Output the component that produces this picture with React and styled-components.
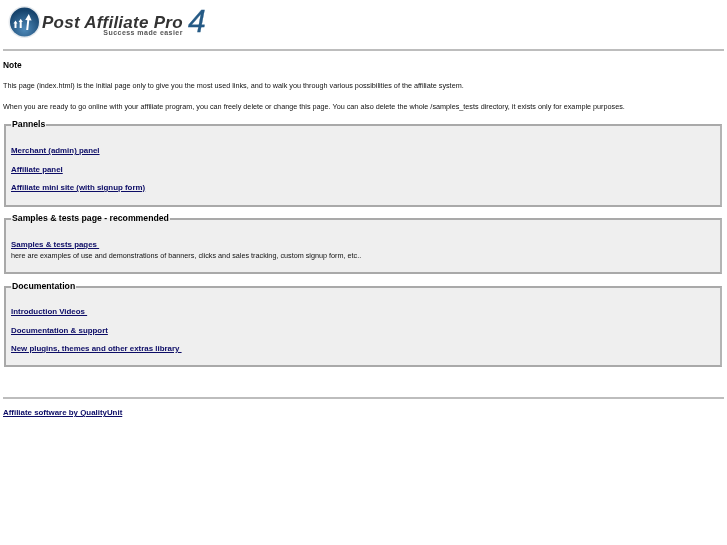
import React from "react";
import styled, { createGlobalStyle } from "styled-components";

const GlobalStyle = createGlobalStyle`
  html, body {
    margin: 0;
    padding: 0;
    background: #fff;
  }
  body {
    font-family: "Liberation Sans", Arial, sans-serif;
    font-size: 7.24px;
    line-height: 11px;
    color: #111;
  }
`;

/* own layer, so small text gets grey antialiasing like the reference */
const Page = styled.div`
  padding: 5px 3px 0;
  will-change: transform;
`;

const Logo = styled.div`
  display: flex;
  align-items: flex-start;
  height: 35px;
  padding-left: 5px;
`;

const LogoMark = styled.svg`
  margin-top: 1px;
  flex: none;
`;

const LogoWords = styled.div`
  display: flex;
  flex-direction: column;
  margin-left: 1px;
  padding-top: 11px;
`;

const LogoName = styled.div`
  font-size: 17px;
  line-height: 14px;
  font-weight: bold;
  font-style: italic;
  color: #333;
  letter-spacing: 0.27px;
  white-space: nowrap;
`;

const LogoTag = styled.div`
  font-size: 7px;
  line-height: 6px;
  font-weight: bold;
  color: #555;
  letter-spacing: 0.46px;
  text-align: right;
  white-space: nowrap;
`;

const LogoFour = styled.div`
  font-size: 32px;
  line-height: 32px;
  font-style: italic;
  color: #255a85;
  -webkit-text-stroke: 0.3px #255a85;
  margin-left: 5px;
`;

const Rule = styled.hr`
  margin: ${(p) => p.$margin};
  height: 2px;
  border: 0;
  background: #bdbdbd;
`;

const Note = styled.h4`
  margin: 9px 0 0;
  font-size: 8.4px;
  line-height: 11px;
  font-weight: bold;
  color: #000;
`;

const Para = styled.p`
  margin: ${(p) => p.$top}px 0 0;
  white-space: nowrap;
`;

const Group = styled.fieldset`
  margin: ${(p) => p.$top}px 2px 0 1px;
  padding: 11px 5px ${(p) => p.$bottom}px;
  min-width: 0;
  background: #efefef;
  border: 2px solid #a9a9a9;
  border-right-color: #b4b4b4;
`;

const GroupTitle = styled.legend`
  padding: 0 1px;
  font-size: 8.7px;
  line-height: 11px;
  font-weight: bold;
  color: #000;
`;

const LinkRow = styled.div`
  margin-top: ${(p) => p.$gap}px;
`;

const Strong = styled.a`
  font-size: 7.9px;
  font-weight: bold;
  color: #0c0c66;
  text-decoration: underline;
`;

const Hint = styled.div`
  color: #111;
`;

const App = () => (
  <Page>
    <GlobalStyle />
    <Logo>
      <LogoMark width="33" height="32" viewBox="0 0 33 32">
        <defs>
          <radialGradient id="orb" cx="50%" cy="75%" r="65%">
            <stop offset="0%" stopColor="#4f8aba" />
            <stop offset="100%" stopColor="#16436c" />
          </radialGradient>
        </defs>
        <circle cx="16.5" cy="16" r="16" fill="#e6eaee" />
        <circle cx="16.5" cy="16" r="14.5" fill="url(#orb)" />
        <path d="M7.5 22v-5M12.7 22v-6.5M19.2 24l1.2-11" stroke="#fff" strokeWidth="2" fill="none" />
        <path d="M5.5 17.5l2-3 2 3zM10.6 16l2.1-3.2 2.1 3.2zM17.2 14l3.6-6 2.8 6.6z" fill="#fff" />
      </LogoMark>
      <LogoWords>
        <LogoName>Post Affiliate Pro</LogoName>
        <LogoTag>Success made easier</LogoTag>
      </LogoWords>
      <LogoFour>4</LogoFour>
    </Logo>
    <Rule $margin="9px 0 0" />
    <Note>Note</Note>
    <Para $top={9}>This page (index.html) is the initial page only to give you the most used links, and to walk you through various possibilities of the affiliate system.</Para>
    <Para $top={10}>When you are ready to go online with your affiliate program, you can freely delete or change this page. You can also delete the whole /samples_tests directory, it exists only for example purposes.</Para>
    <Group $top={7} $bottom={12}>
      <GroupTitle>Pannels</GroupTitle>
      <LinkRow $gap={4}><Strong href="#">Merchant (admin) panel</Strong></LinkRow>
      <LinkRow $gap={8}><Strong href="#">Affiliate panel</Strong></LinkRow>
      <LinkRow $gap={7}><Strong href="#">Affiliate mini site (with signup form)</Strong></LinkRow>
    </Group>
    <Group $top={6} $bottom={11}>
      <GroupTitle>Samples &amp; tests page - recommended</GroupTitle>
      <LinkRow $gap={4}><Strong href="#">Samples &amp; tests pages&nbsp;</Strong></LinkRow>
      <Hint>here are examples of use and demonstrations of banners, clicks and sales tracking, custom signup form, etc..</Hint>
    </Group>
    <Group $top={7} $bottom={11}>
      <GroupTitle>Documentation</GroupTitle>
      <LinkRow $gap={3}><Strong href="#">Introduction Videos&nbsp;</Strong></LinkRow>
      <LinkRow $gap={8}><Strong href="#">Documentation &amp; support</Strong></LinkRow>
      <LinkRow $gap={7}><Strong href="#">New plugins, themes and other extras library&nbsp;</Strong></LinkRow>
    </Group>
    <Rule $margin="30px 0 0" />
    <LinkRow $gap={8}><Strong href="#">Affiliate software by QualityUnit</Strong></LinkRow>
  </Page>
);

export default App;
